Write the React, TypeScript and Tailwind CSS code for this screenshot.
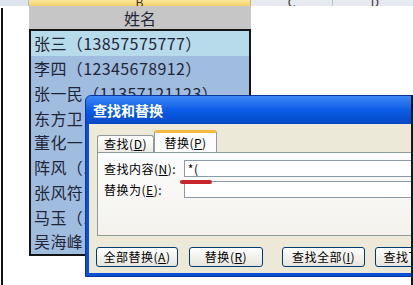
const rows = [
  '张三（13857575777）',
  '李四（12345678912）',
  '张一民（11357121123）',
  '东方卫（13958862345）',
  '董化一（13767891234）',
  '阵风（15812345678）',
  '张风符（13612349876）',
  '马玉（13345678901）',
  '吴海峰（18965432100）',
];

function Key({ k }: { k: string }) {
  return (
    <>
      (<span className="underline">{k}</span>)
    </>
  );
}

function Button({ label, k, w }: { label: string; k: string; w: string }) {
  return (
    <div
      className={`${w} h-[20px] shrink-0 flex items-center justify-center rounded-[3px] border border-[#003c74] bg-gradient-to-b from-white to-[#e6e4dc] text-[12px] tracking-[0.5px] text-black whitespace-nowrap`}
    >
      {label}
      <Key k={k} />
    </div>
  );
}

export default function App() {
  return (
    <div className="relative w-[413px] h-[285px] overflow-hidden bg-white font-['Noto_Sans_CJK_SC',sans-serif]">
      {/* Column headers */}
      <div className="flex h-[6px] text-[12px] leading-none text-[#333]">
        <div className="w-[29px] bg-[#dde4ee] border-r border-[#a9b8cb]" />
        <div className="w-[222px] flex items-end justify-center overflow-hidden bg-gradient-to-b from-[#fbe89a] to-[#f3d066] border-r border-[#c9b46a]">
          <span className="mb-[-2px]">B</span>
        </div>
        <div className="w-[82px] flex items-end justify-center overflow-hidden bg-[#e6eaf0] border-r border-[#b9c3cf]">
          <span className="mb-[-2px]">C</span>
        </div>
        <div className="flex-1 flex items-end justify-center overflow-hidden bg-[#e6eaf0]">
          <span className="mb-[-2px] mr-[-4px]">D</span>
        </div>
      </div>

      {/* Sheet body */}
      <div className="flex text-[16px] text-[#1f2536]">
        <div className="w-[29px] h-[279px] pl-[1px] pt-[2px]">
          <div className="h-full w-[2px] bg-[#111]" />
        </div>
        <div className="w-[222px] flex flex-col">
          <div className="h-[23px] flex items-center justify-center bg-[#c6c6c6]">姓名</div>
          <div className="border-2 border-[#141414] flex flex-col">
            {rows.map((r, i) => (
              <div
                key={r}
                className={`h-[24.75px] flex items-center pl-[3px] tracking-[0.4px] whitespace-nowrap overflow-hidden ${
                  i === 0 ? 'bg-[#b8dbeb]' : 'bg-[#a0bde0]'
                }`}
              >
                {r}
              </div>
            ))}
          </div>
        </div>
        <div className="flex-1" />
      </div>

      {/* Find & replace dialog */}
      <div className="absolute left-[85px] top-[95px] w-[340px] h-[182px] flex flex-col rounded-t-[6px] bg-[#0b4fd4] border border-[#0a36a0] px-[3px] pb-[3px]">
        <div className="h-[28px] shrink-0 flex items-center pl-[7px] -mx-[3px] rounded-t-[5px] bg-gradient-to-b from-[#3d86f5] via-[#0b5de6] to-[#0747c6] text-white text-[14px] font-bold">
          查找和替换
        </div>
        <div className="flex-1 flex flex-col bg-[#ece9d8] px-[8px] pt-[6px] text-[12px] tracking-[0.5px] text-black">
          {/* Tabs */}
          <div className="flex items-end h-[22px]">
            <div className="w-[57px] h-[17px] flex items-center justify-center rounded-t-[3px] border border-b-0 border-[#919b9c] bg-gradient-to-b from-white to-[#ecebe5]">
              查找
              <Key k="D" />
            </div>
            <div className="w-[63px] h-[22px] flex items-center justify-center rounded-t-[3px] border-x border-[#919b9c] border-t-[3px] border-t-[#f5b840] bg-[#fcfcfe]">
              替换
              <Key k="P" />
            </div>
          </div>
          {/* Panel */}
          <div className="relative h-[84px] border border-[#919b9c] bg-gradient-to-b from-[#fcfcfe] to-[#f3f2ec] pl-[6px] pt-[7px] flex flex-col gap-[4px]">
            <div className="flex items-center h-[17px]">
              <div className="w-[84px] whitespace-nowrap">
                查找内容
                <Key k="N" />:
              </div>
              <div className="w-[240px] h-[17px] border border-[#8c9aa8] bg-white pl-[3px] flex items-center">*(</div>
            </div>
            <div className="flex items-center h-[17px]">
              <div className="w-[84px] whitespace-nowrap">
                替换为
                <Key k="E" />:
              </div>
              <div className="w-[240px] h-[17px] border border-[#8c9aa8] bg-white" />
            </div>
            {/* red marker stroke */}
            <div className="absolute left-[82px] top-[27px] w-[32px] h-[4px] rounded-full bg-[#c8262b]" />
          </div>
          {/* Buttons */}
          <div className="flex items-center mt-[11px] -ml-[1px]">
            <Button label="全部替换" k="A" w="w-[82px]" />
            <div className="ml-[11px]">
              <Button label="替换" k="R" w="w-[74px]" />
            </div>
            <div className="ml-[19px]">
              <Button label="查找全部" k="I" w="w-[83px]" />
            </div>
            <div className="ml-[10px]">
              <Button label="查找下一个" k="F" w="w-[96px]" />
            </div>
          </div>
        </div>
      </div>

      {/* right frame line */}
      <div className="absolute right-0 top-[95px] w-[2px] h-[190px] bg-[#15171c]" />
    </div>
  );
}
